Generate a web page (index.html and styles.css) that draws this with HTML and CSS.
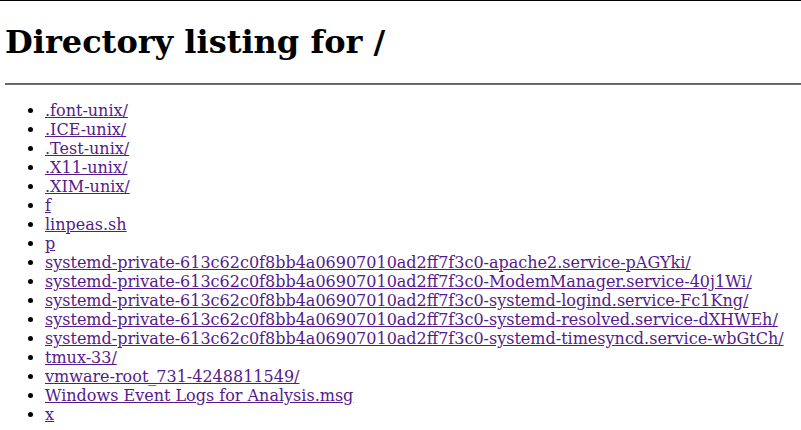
FILE: index.html
```html
<!DOCTYPE HTML>
<html lang="en">
<head>
<meta charset="utf-8">
<title>Directory listing for /</title>
<link rel="stylesheet" href="styles.css">
</head>
<body class="page">
<h1 class="title">Directory listing for /</h1>
<hr class="rule">
<ul class="listing">
<li><a class="link" href=".font-unix/">.font-unix/</a></li>
<li><a class="link" href=".ICE-unix/">.ICE-unix/</a></li>
<li><a class="link" href=".Test-unix/">.Test-unix/</a></li>
<li><a class="link" href=".X11-unix/">.X11-unix/</a></li>
<li><a class="link" href=".XIM-unix/">.XIM-unix/</a></li>
<li><a class="link" href="f">f</a></li>
<li><a class="link" href="linpeas.sh">linpeas.sh</a></li>
<li><a class="link" href="p">p</a></li>
<li><a class="link" href="systemd-private-613c62c0f8bb4a06907010ad2ff7f3c0-apache2.service-pAGYki/">systemd-private-613c62c0f8bb4a06907010ad2ff7f3c0-apache2.service-pAGYki/</a></li>
<li><a class="link" href="systemd-private-613c62c0f8bb4a06907010ad2ff7f3c0-ModemManager.service-40j1Wi/">systemd-private-613c62c0f8bb4a06907010ad2ff7f3c0-ModemManager.service-40j1Wi/</a></li>
<li><a class="link" href="systemd-private-613c62c0f8bb4a06907010ad2ff7f3c0-systemd-logind.service-Fc1Kng/">systemd-private-613c62c0f8bb4a06907010ad2ff7f3c0-systemd-logind.service-Fc1Kng/</a></li>
<li><a class="link" href="systemd-private-613c62c0f8bb4a06907010ad2ff7f3c0-systemd-resolved.service-dXHWEh/">systemd-private-613c62c0f8bb4a06907010ad2ff7f3c0-systemd-resolved.service-dXHWEh/</a></li>
<li><a class="link" href="systemd-private-613c62c0f8bb4a06907010ad2ff7f3c0-systemd-timesyncd.service-wbGtCh/">systemd-private-613c62c0f8bb4a06907010ad2ff7f3c0-systemd-timesyncd.service-wbGtCh/</a></li>
<li><a class="link" href="tmux-33/">tmux-33/</a></li>
<li><a class="link" href="vmware-root_731-4248811549/">vmware-root_731-4248811549/</a></li>
<li><a class="link" href="Windows%20Event%20Logs%20for%20Analysis.msg">Windows Event Logs for Analysis.msg</a></li>
<li><a class="link" href="x">x</a></li>
</ul>
<hr class="rule">
</body>
</html>
```
FILE: styles.css
```css
html {
  border-top: 1px solid #000;
}
.page {
  margin: 8px 0 8px 5px;
  font-family: "DejaVu Serif", serif;
  background: #fff;
  color: #000;
}
.title {
  margin: 14.44px 0 21.44px;
}
.rule {
  height: 0;
  border: 0;
  border-top: 1px solid #636363;
  border-bottom: 1px solid #6e6e6e;
  margin: 8px 0;
}
.link {
  color: #551a8b;
}
```
